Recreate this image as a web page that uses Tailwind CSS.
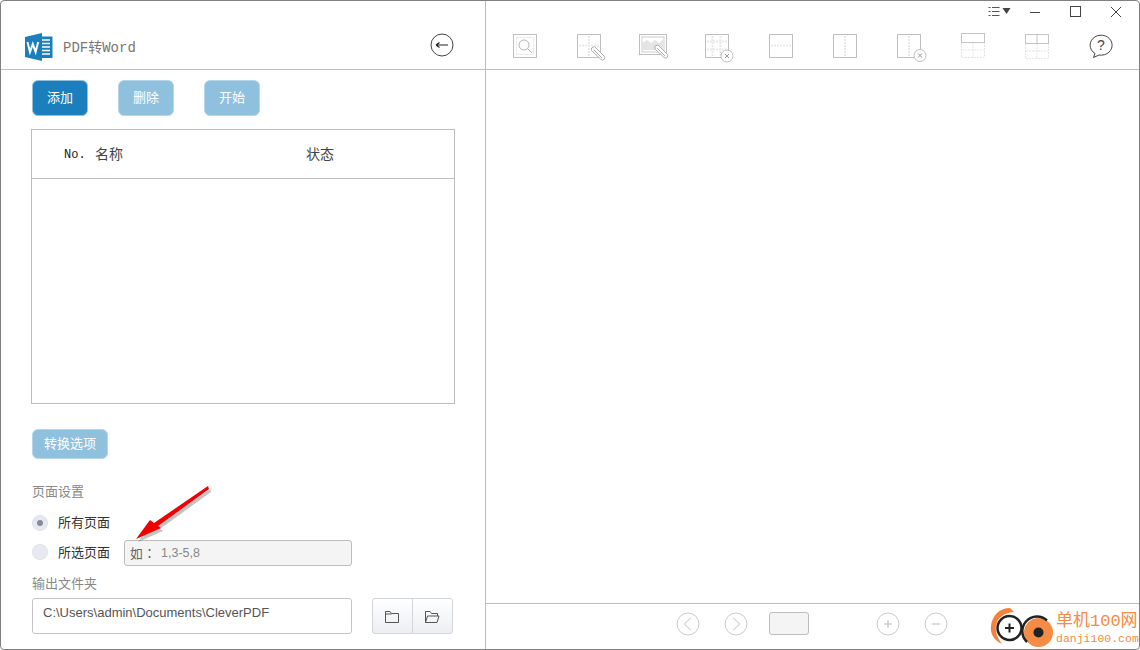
<!DOCTYPE html>
<html lang="zh-CN">
<head>
    <meta charset="UTF-8">
    <title>PDF转Word</title>
    <script src="https://cdn.jsdelivr.net/npm/@tailwindcss/browser@4"></script>
</head>
<body class="bg-white overflow-hidden">
    <div class="relative flex w-[1140px] h-[650px] bg-white border border-[#808080] rounded-[4px] overflow-hidden font-['Liberation_Sans','Noto_Sans_CJK_SC',sans-serif] text-[13px] text-[#333]">

        <!-- left panel -->
        <div class="w-[485px] shrink-0 flex flex-col border-r border-[#bdbdbd]">
            <div class="h-[69px] shrink-0 flex items-end border-b border-[#bdbdbd] pl-[24px] pr-[30px] pb-[7px]">
                <svg width="28" height="28" viewBox="0 0 28 28" class="mb-[1px]">
                    <path d="M0 4 L17 0 V28 L0 24 Z" fill="#1a7fbc"/>
                    <path d="M17 3.5 H27.5 V25 H17 Z" fill="#1a7fbc"/>
                    <path d="M17 7 H25 M17 10.5 H25 M17 14 H25 M17 17.5 H25 M17 21 H25" stroke="#fff" stroke-width="1.5"/>
                    <path d="M2.5 9 L5 19 L7.8 11 L10.6 19 L13.2 9" fill="none" stroke="#fff" stroke-width="2"/>
                </svg>
                <span class="ml-[10px] mb-[4px] font-['Liberation_Mono','Noto_Sans_CJK_SC',monospace] text-[14px] leading-[20px] text-[#777]">PDF转Word</span>
                <svg width="24" height="24" viewBox="0 0 24 24" class="ml-auto mb-[5px] mr-[1px]">
                    <circle cx="12" cy="12" r="11" fill="none" stroke="#444" stroke-width="1"/>
                    <path d="M6 12 H18 M6 12 L9.5 9.5 M6 12 L9.5 14.5" fill="none" stroke="#222" stroke-width="1.2"/>
                </svg>
            </div>

            <div class="flex-1 flex flex-col pl-[30px]">
                <div class="flex gap-[30px] mt-[10px] ml-[1px]">
                    <button class="w-[56px] h-[36px] rounded-[6px] bg-[#1a7fbc] border border-[#8fc0de] text-white text-[13px]">添加</button>
                    <button class="w-[56px] h-[36px] rounded-[6px] bg-[#8fc0de] border border-[#b5d6ea] text-white text-[13px]">删除</button>
                    <button class="w-[56px] h-[36px] rounded-[6px] bg-[#8fc0de] border border-[#b5d6ea] text-white text-[13px]">开始</button>
                </div>

                <div class="mt-[13px] w-[424px] h-[275px] border border-[#bdbdbd]">
                    <div class="h-[49px] flex items-center border-b border-[#bdbdbd] text-[14px] text-[#444]">
                        <span class="ml-[32px] w-[31px] mt-[2px] font-['Liberation_Mono',monospace] text-[12px] text-[#222]">No.</span>
                        <span class="w-[211px]">名称</span>
                        <span>状态</span>
                    </div>
                </div>

                <button class="mt-[25px] ml-[1px] w-[76px] h-[30px] rounded-[6px] bg-[#8fc0de] border border-[#b5d6ea] text-white text-[13px]">转换选项</button>

                <div class="mt-[24px] ml-[1px] h-[18px] leading-[18px] text-[#888]">页面设置</div>

                <div class="mt-[12px] ml-[1px] h-[20px] flex items-center">
                    <span class="w-[16px] h-[16px] rounded-full bg-[#e6e9ef] border border-[#dde0e7] flex items-center justify-center">
                        <span class="w-[6px] h-[6px] rounded-full bg-[#858a9c]"></span>
                    </span>
                    <span class="ml-[10px] text-[#333]">所有页面</span>
                </div>
                <div class="mt-[7px] ml-[1px] h-[26px] flex items-center">
                    <span class="w-[16px] h-[16px] rounded-full bg-[#e6e9ef] border border-[#dde0e7] -mt-[2px]"></span>
                    <span class="ml-[10px] text-[#333]">所选页面</span>
                    <div class="ml-[14px] w-[228px] h-[26px] flex items-center rounded-[3px] bg-[#f4f4f4] border border-[#bdbdbd] pl-[5px] text-[13px] text-[#888]">
                        <span lang="zh-TW" class="font-['Noto_Sans_CJK_TC',sans-serif] text-[#666]">如：</span><span class="ml-[5px] text-[12.5px]">1,3-5,8</span>
                    </div>
                </div>

                <div class="mt-[9px] ml-[1px] h-[18px] leading-[18px] text-[#888]">输出文件夹</div>

                <div class="mt-[5px] ml-[1px] flex">
                    <div class="w-[320px] h-[36px] flex items-center rounded-[3px] bg-white border border-[#c4c4c8] pl-[10px] pb-[6px] text-[13px] text-[#555]">C:\Users\admin\Documents\CleverPDF</div>
                    <div class="ml-[20px] w-[81px] h-[36px] flex rounded-[3px] border border-[#d3d5dd] bg-gradient-to-b from-white to-[#eceef3]">
                        <span class="flex-1 flex items-center justify-center border-r border-[#d3d5dd] pr-[2px] pt-[2px]">
                            <svg width="16" height="14" viewBox="0 0 16 14"><path d="M1.5 12.5 V1.5 H6 L7.5 3.5 H14.5 V12.5 Z M1.5 4 H7.5" fill="none" stroke="#555" stroke-width="1"/></svg>
                        </span>
                        <span class="flex-1 flex items-center justify-center pr-[2px] pt-[2px]">
                            <svg width="16" height="14" viewBox="0 0 16 14"><path d="M1.5 12.5 V1.5 H6 L7.5 3.5 H13.5 V6 M1.5 12.5 L3.5 6 H15 L13 12.5 Z" fill="none" stroke="#555" stroke-width="1"/></svg>
                        </span>
                    </div>
                </div>
            </div>
        </div>

        <!-- right panel -->
        <div class="flex-1 flex flex-col">
            <div class="h-[69px] shrink-0 flex flex-col border-b border-[#bdbdbd]">
                <div class="h-[21px] flex items-center justify-end">
                    <svg width="24" height="12" viewBox="0 0 24 12" class="mr-[17px]">
                        <path d="M0.5 1.5 H2.5 M0.5 5.5 H2.5 M0.5 9.5 H2.5" stroke="#555" stroke-width="1"/>
                        <path d="M4 1.5 H11.5 M4 5.5 H11.5 M4 9.5 H11.5" stroke="#555" stroke-width="1"/>
                        <path d="M14.5 2 H22.5 L18.5 8 Z" fill="#444"/>
                    </svg>
                    <svg width="12" height="12" viewBox="0 0 12 12" class="mr-[29px]"><path d="M1 6.5 H11" stroke="#444" stroke-width="1"/></svg>
                    <svg width="11" height="11" viewBox="0 0 11 11" class="mr-[29px]"><rect x="0.5" y="0.5" width="10" height="10" fill="none" stroke="#444"/></svg>
                    <svg width="12" height="12" viewBox="0 0 12 12" class="mr-[17px]"><path d="M1 1 L11 11 M11 1 L1 11" stroke="#444" stroke-width="1"/></svg>
                </div>
                <div class="flex-1 flex items-center pl-[7px]">
                    <!-- zoom to area -->
                    <span class="w-[64px] flex justify-center"><svg width="26" height="26" viewBox="0 0 26 26"><rect x="1.5" y="1.5" width="23" height="23" fill="none" stroke="#bfbfbf"/><rect x="4.5" y="4.5" width="17" height="17" fill="none" stroke="#e2e2e2" stroke-dasharray="2 1"/><circle cx="12" cy="12" r="5" fill="none" stroke="#b5b5b5"/><path d="M15.5 15.5 L20 20" stroke="#b5b5b5"/></svg></span>
                    <!-- edit grid -->
                    <span class="w-[64px] flex justify-center"><svg width="26" height="26" viewBox="0 0 26 26" class="overflow-visible"><rect x="1.5" y="1.5" width="23" height="23" fill="none" stroke="#bfbfbf"/><path d="M3 12.5 H23 M13 3 V23" stroke="#e8e8e8" stroke-width="2" stroke-dasharray="2 1"/><path d="M15.5 15 L18.5 13.5 L28 23 A2.2 2.2 0 0 1 25 26.5 L15.5 17.5 Z M17.5 16.5 L26 25" fill="#fff" stroke="#b0b0b0"/></svg></span>
                    <!-- edit image -->
                    <span class="w-[64px] flex justify-center"><svg width="30" height="26" viewBox="0 0 30 26" class="overflow-visible"><rect x="1.5" y="1.5" width="27" height="20" fill="none" stroke="#bfbfbf"/><rect x="4" y="4" width="22" height="15" fill="none" stroke="#ccc"/><path d="M4.5 10 L9 7 L13 10 L17 7 L21 10 L25 7 V17 H4.5 Z" fill="#e4e4e4"/><path d="M17 13 L20 12 L29 21 A2.2 2.2 0 0 1 26 24.5 L17 16 Z M19 15 L27 23" fill="#fff" stroke="#b0b0b0"/></svg></span>
                    <!-- delete grid -->
                    <span class="w-[64px] flex justify-center"><svg width="26" height="26" viewBox="0 0 26 26" class="overflow-visible"><rect x="1.5" y="1.5" width="23" height="23" fill="none" stroke="#bfbfbf"/><path d="M3 8.5 H23 M3 16.5 H23 M8.5 3 V23 M16.5 3 V23" stroke="#e8e8e8" stroke-width="2" stroke-dasharray="2 1"/><circle cx="23" cy="23" r="6" fill="#fff" stroke="#bfbfbf"/><path d="M21 21 L25 25 M25 21 L21 25" stroke="#999"/></svg></span>
                    <!-- horizontal -->
                    <span class="w-[64px] flex justify-center"><svg width="26" height="26" viewBox="0 0 26 26"><rect x="1.5" y="1.5" width="23" height="23" fill="none" stroke="#bfbfbf"/><path d="M3 12.5 H23" stroke="#e8e8e8" stroke-width="2" stroke-dasharray="2 1"/></svg></span>
                    <!-- vertical -->
                    <span class="w-[64px] flex justify-center"><svg width="26" height="26" viewBox="0 0 26 26"><rect x="1.5" y="1.5" width="23" height="23" fill="none" stroke="#bfbfbf"/><path d="M13 3 V23" stroke="#e8e8e8" stroke-width="2" stroke-dasharray="2 1"/></svg></span>
                    <!-- delete vertical -->
                    <span class="w-[64px] flex justify-center"><svg width="26" height="26" viewBox="0 0 26 26" class="overflow-visible"><rect x="1.5" y="1.5" width="23" height="23" fill="none" stroke="#bfbfbf"/><path d="M13 3 V23" stroke="#e8e8e8" stroke-width="2" stroke-dasharray="2 1"/><circle cx="24" cy="22.5" r="6" fill="#fff" stroke="#bfbfbf"/><path d="M22 20.5 L26 24.5 M26 20.5 L22 24.5" stroke="#999"/></svg></span>
                    <!-- header row -->
                    <span class="w-[64px] flex justify-center"><svg width="26" height="27" viewBox="0 0 26 27"><rect x="1.5" y="1.5" width="23" height="9" fill="none" stroke="#c4c4c4"/><path d="M1.5 11 V25.5 H24.5 V11 M2 18 H24 M13 11 V25" fill="none" stroke="#e4e4e4" stroke-dasharray="2 1"/></svg></span>
                    <!-- header columns -->
                    <span class="w-[64px] flex justify-center"><svg width="26" height="26" viewBox="0 0 26 26"><rect x="1.5" y="1.5" width="23" height="9" fill="none" stroke="#c4c4c4"/><path d="M13 1.5 V10" stroke="#c4c4c4"/><path d="M1.5 11 V25.5 H24.5 V11 M2 18 H24 M13 11 V25" fill="none" stroke="#e4e4e4" stroke-dasharray="2 1"/></svg></span>
                    <!-- help -->
                    <span class="w-[64px] flex justify-center"><svg width="26" height="26" viewBox="0 0 26 26"><path d="M7 20.5 A11 10 0 1 1 11 22 L5.5 24.5 Z" fill="none" stroke="#444"/><text x="13" y="17" text-anchor="middle" font-size="14" fill="#444" font-family="Liberation Sans">?</text></svg></span>
                </div>
            </div>

            <div class="flex-1"></div>

            <div class="h-[46px] shrink-0 border-t border-[#bdbdbd] flex items-center pl-[190px] pb-[6px]">
                <svg width="24" height="24" viewBox="0 0 24 24"><circle cx="12" cy="12" r="11" fill="none" stroke="#ccc"/><path d="M14.5 6 L8.5 12 L14.5 18" fill="none" stroke="#bbb"/></svg>
                <svg width="24" height="24" viewBox="0 0 24 24" class="ml-[24px]"><circle cx="12" cy="12" r="11" fill="none" stroke="#ccc"/><path d="M9.5 6 L15.5 12 L9.5 18" fill="none" stroke="#bbb"/></svg>
                <div class="ml-[21px] w-[40px] h-[23px] rounded-[3px] bg-[#f4f4f4] border border-[#bdbdbd]"></div>
                <svg width="24" height="24" viewBox="0 0 24 24" class="ml-[67px]"><circle cx="12" cy="12" r="11" fill="none" stroke="#ccc"/><path d="M8 12 H16 M12 8 V16" stroke="#bbb"/></svg>
                <svg width="24" height="24" viewBox="0 0 24 24" class="ml-[24px]"><circle cx="12" cy="12" r="11" fill="none" stroke="#ccc"/><path d="M8 12 H16" stroke="#bbb"/></svg>
            </div>
        </div>

        <!-- red arrow annotation -->
        <svg class="absolute left-[129px] top-[479px]" width="90" height="70" viewBox="0 0 90 70">
            <path d="M78 6 L79 9 L28 46 L31 48 L6 59 L20 40 L24 43 Z" fill="#555" opacity="0.35" transform="translate(2 3)"/>
            <path d="M78 6 L79 9 L28 46 L31 48 L6 59 L20 40 L24 43 Z" fill="#f00000"/>
        </svg>

        <!-- watermark -->
        <div class="absolute right-0 bottom-0 flex items-end">
            <svg width="64" height="44" viewBox="0 0 64 44">
                <path d="M20 3 C9 3 2 11 1 21 C0 29 4 35 12 39 C8 33 5 28 6 21 C7 13 13 8 24 7 Z" fill="#f5813a"/>
                <circle cx="19.5" cy="23" r="12" fill="#fff" stroke="#222" stroke-width="2.5"/>
                <path d="M15 23 H24 M19.5 18.5 V27.5" stroke="#222" stroke-width="2"/>
                <circle cx="48.5" cy="27.5" r="14.5" fill="#f58b45"/>
                <path d="M37 37 A14.5 14.5 0 0 1 57 15.5" fill="none" stroke="#222" stroke-width="2.5"/>
                <circle cx="48.5" cy="27.5" r="5" fill="#222"/>
            </svg>
            <div class="w-[85px] pl-[2px] pb-[3px] font-['Liberation_Mono','Noto_Sans_CJK_SC',monospace] text-[#f58b45]">
                <div class="text-[17px] leading-[22px]">单机100网</div>
                <div class="text-[11.5px] leading-[15px] -mt-[2px]">danji100.com</div>
            </div>
        </div>
    </div>
</body>
</html>
